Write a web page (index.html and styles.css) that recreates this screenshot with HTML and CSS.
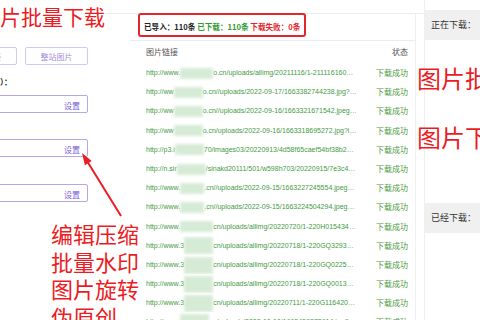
FILE: index.html
```html
<!DOCTYPE html>
<html lang="zh-CN">
<head>
  <meta charset="UTF-8" />
  <title>图片批量下载</title>
  <link rel="stylesheet" href="styles.css">
</head>
<body>

  <div class="page">
    <div class="main">
      <div class="left">
        <div class="left-inner">
          <div class="btn-row">
            <button class="btn">导入链接</button>
            <button class="btn">整站图片</button>
          </div>
          <div class="label">保存路径）：</div>
          <div class="field"><span class="set">设置</span></div>
          <div class="field second"><span class="set">设置</span></div>
          <div class="field third"><span class="set">设置</span></div>
        </div>
      </div>

      <div class="center">
        <div class="stats">
          <span class="dark">已导入：110条</span>
          <span class="ok">已下载：110条</span>
          <span class="fail">下载失败：0条</span>
        </div>
        <div class="thead">
          <span class="col-url">图片链接</span>
          <span class="col-state">状态</span>
        </div>
        <div id="rows"></div>
      </div>
    </div>

    <div class="right">
      <div class="box">正在下载：</div>
      <div class="box done">已经下载：</div>
    </div>
  </div>

  <!-- annotations drawn over the screenshot -->
  <div class="note title">片批量下载</div>
  <div class="note big">编辑压缩<br>批量水印<br>图片旋转<br>伪原创</div>
  <div class="note side first">图片批量下载</div>
  <div class="note side second">图片下载工具</div>
  <svg class="arrow" width="50" height="72" viewBox="0 0 50 72">
    <line x1="11" y1="13" x2="45" y2="68" stroke="#ec1c24" stroke-width="2" />
    <polygon points="6,5 15.7,13.1 8.9,17.3" fill="#ec1c24" />
  </svg>

  <script>
    // pre = visible head of the link, blur = masked part, post = tail
    const links = [
      ["http://www.", "w", "o.cn/uploads/allimg/20211116/1-2111161609.jpg"],
      ["http://ww", "", "o.cn//uploads/2022-09-17/1663382744238.jpg?x1"],
      ["http://ww", "", "o.cn//uploads/2022-09-16/1663321671542.jpeg?x12"],
      ["http://ww", "", "o.cn/uploads/2022-09-16/1663318695272.jpg?imv2"],
      ["http://p3.i", "", "70/images03/20220913/4d58f65caef54bf38b2a9e"],
      ["http://n.sir", "", "/sinakd20111/501/w598h703/20220915/7e3c4a1b"],
      ["http://www.", "n", ".cn//uploads/2022-09-15/1663227245554.jpeg?x12"],
      ["http://www.", "n", ".cn//uploads/2022-09-15/1663224504294.jpeg?x12"],
      ["http://www.", "w", "cn/uploads/allimg/20220720/1-220H0154340-5"],
      ["http://www.3", "tall", "cn/uploads/allimg/20220718/1-220GQ32932-50"],
      ["http://www.3", "tall", "cn/uploads/allimg/20220718/1-220GQ02253-50"],
      ["http://www.3", "tall", "cn/uploads/allimg/20220718/1-220GQ00133-50"],
      ["http://www.3", "tall", "cn/uploads/allimg/20220711/1-220G1164204-5"],
      ["http://www.", "tall", "cn/uploads/2022-10-10/1665456873614.jpg?x12"]
    ];

    const rows = document.getElementById("rows");
    links.forEach(function (l) {
      const row = document.createElement("div");
      row.className = "row";
      row.innerHTML = `
        <span class="col-url url">${l[0]}<i class="blur ${l[1]}"></i>${l[2]}</span>
        <span class="col-state state">下载成功</span>
      `;
      rows.appendChild(row);
    });
  </script>

</body>
</html>
```

FILE: styles.css
```css
body {
  margin: 0;
  width: 480px;
  height: 320px;
  overflow: hidden;
  position: relative;
  background: #fff;
  font-family: "Liberation Sans", "Noto Sans CJK SC", sans-serif;
  color: #333;
}
.page {
  display: flex;
  height: 320px;
}
.main {
  display: flex;
  width: 424px;
  margin-top: 13px;
  border-top: 1px solid #ececec;
}
.left {
  width: 130px;
}
.left-inner {
  margin-left: -60px;
}
.btn-row {
  display: flex;
  gap: 8px;
  margin: 33px 0 0 13px;
}
.btn {
  width: 64px;
  height: 18px;
  padding: 0;
  background: #fff;
  border: 1px solid #d3c8f1;
  border-radius: 2px;
  font-family: "Noto Sans CJK SC", sans-serif;
  font-size: 8px;
  color: #a490d9;
}
.btn + .btn {
  width: 63px;
}
.label {
  margin: 11px 0 0 28px;
  height: 12px;
  line-height: 12px;
  font-family: "Noto Sans CJK SC", sans-serif;
  font-size: 8px;
  font-weight: bold;
  color: #222;
}
.field {
  box-sizing: border-box;
  margin: 7px 0 0 13px;
  width: 135px;
  height: 18px;
  border: 1px solid #b8a5ea;
  border-radius: 2px;
  text-align: right;
  padding-right: 7px;
  line-height: 16px;
}
.field.second {
  margin-top: 26px;
}
.field.third {
  margin-top: 27px;
}
.set {
  font-family: "Noto Sans CJK SC", sans-serif;
  font-size: 8px;
  color: #7a5cd6;
}
.center {
  width: 285px;
  border-right: 1px solid #efefef;
}
.stats {
  position: relative;
  height: 26px;
  line-height: 26px;
  padding-left: 14px;
  border-bottom: 1px solid #ececec;
  font-family: "Noto Sans CJK SC", sans-serif;
  font-size: 7.6px;
  font-weight: bold;
  white-space: nowrap;
}
.stats::before {
  content: "";
  position: absolute;
  left: 8px;
  top: -1px;
  width: 164px;
  height: 20px;
  border: 2px solid #e3262b;
  border-radius: 3px;
}
.dark { color: #222; }
.ok { color: #2f9a2f; }
.fail { color: #e3262b; }
.thead, .row {
  display: flex;
  padding-left: 16px;
}
.thead {
  height: 22px;
  line-height: 22px;
  font-family: "Noto Sans CJK SC", sans-serif;
  font-size: 8px;
  color: #555;
}
.row {
  height: 19.2px;
  line-height: 19.2px;
}
.col-url {
  width: 211px;
  overflow: hidden;
  white-space: nowrap;
  text-overflow: ellipsis;
}
.col-state {
  flex: 1;
  text-align: right;
  padding-right: 7px;
}
.url {
  font-size: 7px;
  color: #3f9b3f;
}
.state {
  font-family: "Noto Sans CJK SC", sans-serif;
  font-size: 8px;
  color: #4e9a3e;
}
.blur {
  display: inline-block;
  width: 29px;
  height: 11px;
  vertical-align: middle;
  background: #d6ebd6;
  filter: blur(1.5px);
}
.blur.w { width: 33px; }
.blur.n { width: 24px; }
.blur.tall {
  width: 29px;
  height: 17px;
}
.right {
  flex: 1;
  border-left: 1px solid #efefef;
  padding-top: 10px;
}
.box {
  height: 30px;
  line-height: 30px;
  padding-left: 6px;
  background: #f0f0f0;
  font-family: "Noto Sans CJK SC", sans-serif;
  font-size: 9px;
  color: #333;
  white-space: nowrap;
}
.box.done {
  margin-top: 163px;
}
.note {
  position: absolute;
  color: #ec1c24;
  font-family: "Noto Sans CJK SC", sans-serif;
  white-space: nowrap;
}
.title {
  left: 0;
  top: 6px;
  font-size: 21px;
  line-height: 21px;
  background: #fff;
}
.big {
  left: 51px;
  top: 220px;
  font-size: 22px;
  line-height: 27.5px;
}
.side {
  left: 417px;
  font-size: 24px;
  line-height: 24px;
}
.side.first { top: 66px; }
.side.second { top: 125px; }
.arrow {
  position: absolute;
  left: 76px;
  top: 148px;
}
```
